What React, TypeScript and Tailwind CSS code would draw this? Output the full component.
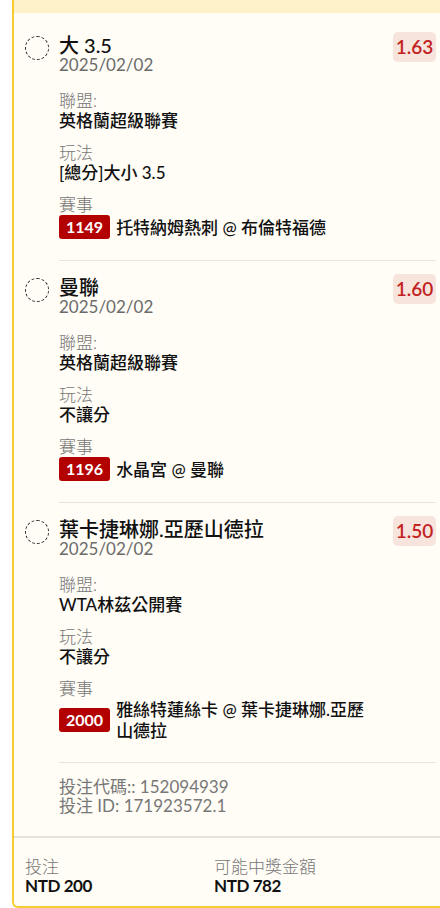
import React from 'react';

type Item = {
  title: string;
  odds: string;
  league: string;
  market: string;
  id: string;
  match: string;
};

const items: Item[] = [
  { title: '大 3.5', odds: '1.63', league: '英格蘭超級聯賽', market: '[總分]大小 3.5', id: '1149', match: '托特納姆熱刺 @ 布倫特福德' },
  { title: '曼聯', odds: '1.60', league: '英格蘭超級聯賽', market: '不讓分', id: '1196', match: '水晶宮 @ 曼聯' },
  { title: '葉卡捷琳娜.亞歷山德拉', odds: '1.50', league: 'WTA林茲公開賽', market: '不讓分', id: '2000', match: '雅絲特蓮絲卡 @ 葉卡捷琳娜.亞歷山德拉' },
];

function Leg({ item }: { item: Item }) {
  return (
    <div className="flex pt-[13px] pl-[11px] pr-[4px]">
      <div className="mt-[4px] h-6 w-6 shrink-0 rounded-full border border-dashed border-[#333]" />
      <div className="ml-[10px] flex-1 border-b border-[#e8e5dd] pb-[21px]">
        <div className="flex items-start">
          <div className="min-w-0 flex-1 pt-[3px]">
            <div className="text-[20px] leading-5 font-medium text-[#111]">{item.title}</div>
            <div className="text-[17px] leading-5 font-normal text-[#6b6b6b]">2025/02/02</div>
            <div className="mt-4 text-[17px] leading-5 font-light text-[#777]">聯盟:</div>
            <div className="text-[17px] leading-5 font-medium text-[#111]">{item.league}</div>
            <div className="mt-3 text-[17px] leading-5 font-light text-[#777]">玩法</div>
            <div className="text-[17px] leading-5 font-medium text-[#111]">{item.market}</div>
            <div className="mt-3 text-[17px] leading-5 font-light text-[#777]">賽事</div>
            <div className="flex items-center">
              <div className="flex h-6 shrink-0 items-center rounded-[3px] bg-[#b30000] px-[7px] text-[16px] font-bold text-white">
                {item.id}
              </div>
              <div className="ml-[6px] text-[17px] leading-[21px] font-medium text-[#111]">{item.match}</div>
            </div>
          </div>
          <div className="ml-[16px] flex h-[30px] w-[43px] shrink-0 items-center justify-center rounded-[5px] bg-[#f7e5dd] text-[19px] font-semibold text-[#c2231f]">
            {item.odds}
          </div>
        </div>
      </div>
    </div>
  );
}

export default function App() {
  return (
    <div className="min-h-[908px] bg-white pl-3 font-['Lato','Noto_Sans_CJK_TC',sans-serif]">
      <div className="rounded-bl-[6px] border-b-2 border-l-2 border-[#f8cb2e] bg-[#fffdf6]">
        <div className="h-[13px] bg-[#fdf1c9]" />
        <div className="pt-[6px]">
          {items.map((it) => (
            <Leg key={it.id} item={it} />
          ))}
        </div>
        <div className="pl-[45px] pt-[14px] pb-[21px] text-[17px] leading-[19px] font-normal text-[#777]">
          <div>投注代碼:: 152094939</div>
          <div>投注 ID: 171923572.1</div>
        </div>
        <div className="flex border-t-2 border-[#e6e2da] px-[11px] pt-[19px] pb-[11px]">
          <div className="w-[189px]">
            <div className="text-[17px] leading-5 font-light text-[#777]">投注</div>
            <div className="text-[17px] leading-[18px] font-bold tracking-tight text-[#111]">NTD 200</div>
          </div>
          <div>
            <div className="text-[17px] leading-5 font-light text-[#777]">可能中獎金額</div>
            <div className="text-[17px] leading-[18px] font-bold tracking-tight text-[#111]">NTD 782</div>
          </div>
        </div>
      </div>
    </div>
  );
}
